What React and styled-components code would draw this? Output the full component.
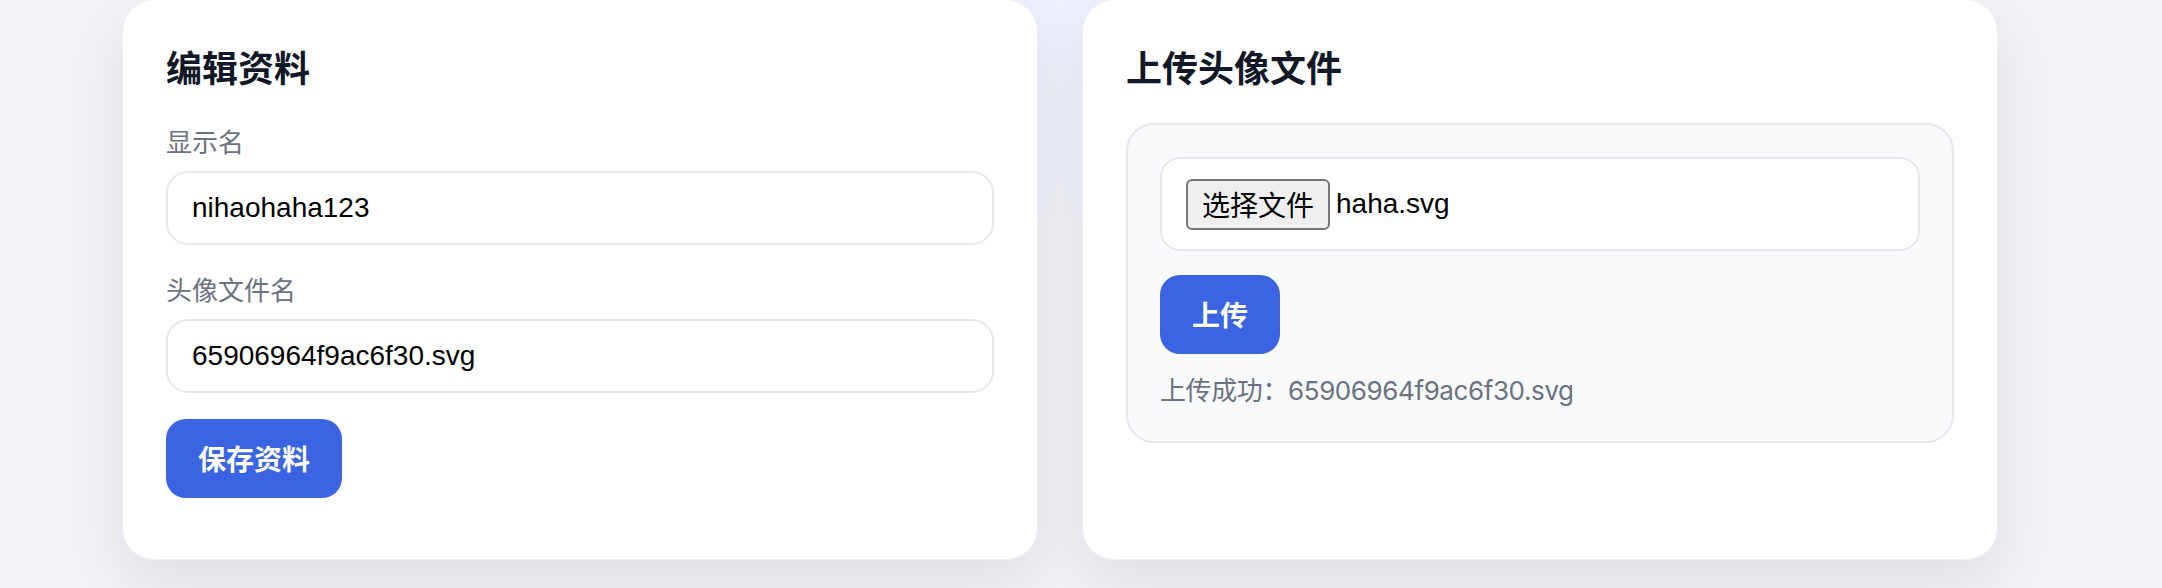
import React from "react";
import styled, { createGlobalStyle } from "styled-components";

const GlobalStyle = createGlobalStyle`
  html, body {
    margin: 0;
    padding: 0;
  }

  body {
    min-height: 588px;
    background:
      radial-gradient(ellipse 700px 260px at 50% 0%, #edf0fc 0%, rgba(237, 240, 252, 0) 100%),
      #f1f2f6;
    font-family: Inter, "Noto Sans CJK SC", sans-serif;
  }
`;

const Page = styled.div`
  display: grid;
  grid-template-columns: 916px 916px;
  column-gap: 44px;
  align-items: stretch;
  padding-left: 122px;
`;

const Card = styled.section`
  background: #ffffff;
  border: 1px solid #eceef2;
  border-top: none;
  border-radius: 32px;
  box-shadow: 0 24px 60px rgba(17, 24, 39, 0.08);
  padding: 48px 43px 61px;
  display: flex;
  flex-direction: column;
`;

const Title = styled.h2`
  margin: 0 0 31px;
  font-family: "Liberation Sans", "Noto Sans CJK SC", sans-serif;
  font-size: 36px;
  line-height: 44px;
  font-weight: 700;
  color: #111827;
`;

const Form = styled.div`
  display: flex;
  flex-direction: column;
  align-items: flex-start;
  gap: 26px;
`;

const Field = styled.label`
  display: flex;
  flex-direction: column;
  gap: 12px;
  align-self: stretch;
`;

const Label = styled.span`
  font-family: "Noto Sans CJK SC", sans-serif;
  font-size: 26px;
  line-height: 36px;
  color: #6b7280;
`;

const Input = styled.input`
  box-sizing: border-box;
  height: 74px;
  padding: 0 24px;
  border: 2px solid #e5e7eb;
  border-radius: 22px;
  background: #ffffff;
  font-family: "Liberation Sans", Arial, sans-serif;
  font-size: 28px;
  color: #000000;
  outline: none;
`;

const Button = styled.button`
  border: none;
  border-radius: 20px;
  background: #3a64e2;
  color: #ffffff;
  font-family: "Noto Sans CJK SC", sans-serif;
  font-size: 28px;
  font-weight: 700;
  line-height: 35px;
  padding: 22px 32px;
  cursor: pointer;
`;

const Panel = styled.div`
  border: 2px solid #e5e7eb;
  border-radius: 28px;
  background: #f8fafc;
  padding: 32px;
  display: flex;
  flex-direction: column;
  align-items: flex-start;
`;

const FileBox = styled.div`
  box-sizing: border-box;
  align-self: stretch;
  height: 94px;
  padding: 0 24px;
  border: 2px solid #e5e7eb;
  border-radius: 20px;
  background: #ffffff;
  display: flex;
  align-items: center;
  margin-bottom: 24px;
`;

const PickButton = styled.span`
  box-sizing: border-box;
  height: 51px;
  padding: 0 14px;
  display: inline-flex;
  align-items: center;
  border: 2px solid #767676;
  border-radius: 6px;
  background: #efefef;
  font-family: "Noto Sans CJK SC", sans-serif;
  font-size: 28px;
  color: #000000;
`;

const FileName = styled.span`
  margin-left: 6px;
  font-family: "Liberation Sans", Arial, sans-serif;
  font-size: 28px;
  color: #000000;
`;

const Status = styled.p`
  margin: 19px 0 0;
  font-family: Inter, "Noto Sans CJK SC", sans-serif;
  font-size: 26px;
  line-height: 36px;
  letter-spacing: -0.4px;
  color: #6b7280;
`;

const App = () => {
  return (
    <>
      <GlobalStyle />
      <Page>
        <Card>
          <Title>编辑资料</Title>
          <Form>
            <Field>
              <Label>显示名</Label>
              <Input defaultValue="nihaohaha123" />
            </Field>
            <Field>
              <Label>头像文件名</Label>
              <Input defaultValue="65906964f9ac6f30.svg" />
            </Field>
            <Button>保存资料</Button>
          </Form>
        </Card>

        <Card>
          <Title>上传头像文件</Title>
          <Panel>
            <FileBox>
              <PickButton>选择文件</PickButton>
              <FileName>haha.svg</FileName>
            </FileBox>
            <Button>上传</Button>
            <Status>上传成功：65906964f9ac6f30.svg</Status>
          </Panel>
        </Card>
      </Page>
    </>
  );
};

export default App;
